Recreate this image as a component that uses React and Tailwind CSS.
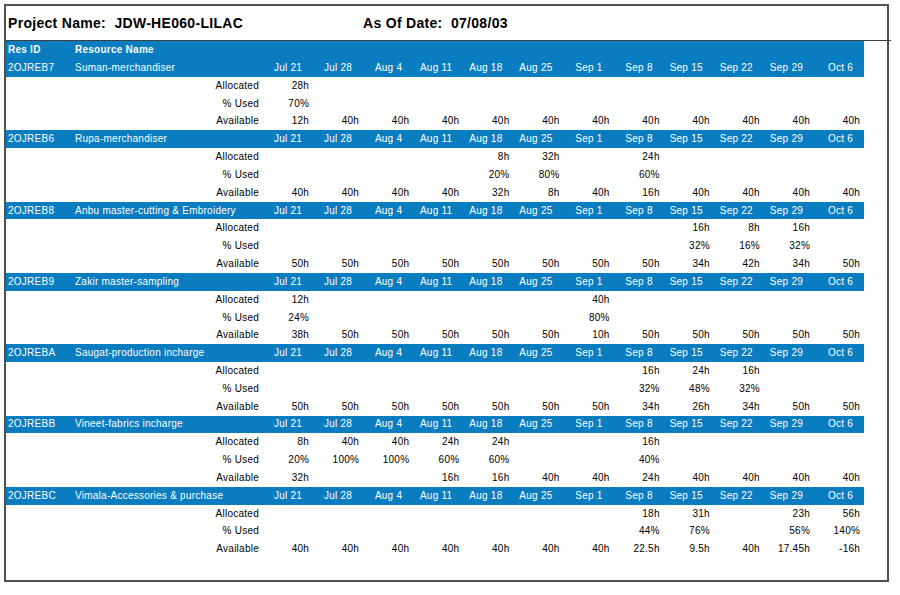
import React from 'react';

const DATES = ['Jul 21', 'Jul 28', 'Aug 4', 'Aug 11', 'Aug 18', 'Aug 25', 'Sep 1', 'Sep 8', 'Sep 15', 'Sep 22', 'Sep 29', 'Oct 6'];

const e = '';

const RESOURCES = [
  {
    id: '2OJREB7',
    name: 'Suman-merchandiser',
    allocated: ['28h', e, e, e, e, e, e, e, e, e, e, e],
    used: ['70%', e, e, e, e, e, e, e, e, e, e, e],
    available: ['12h', '40h', '40h', '40h', '40h', '40h', '40h', '40h', '40h', '40h', '40h', '40h'],
  },
  {
    id: '2OJREB6',
    name: 'Rupa-merchandiser',
    allocated: [e, e, e, e, '8h', '32h', e, '24h', e, e, e, e],
    used: [e, e, e, e, '20%', '80%', e, '60%', e, e, e, e],
    available: ['40h', '40h', '40h', '40h', '32h', '8h', '40h', '16h', '40h', '40h', '40h', '40h'],
  },
  {
    id: '2OJREB8',
    name: 'Anbu master-cutting & Embroidery',
    allocated: [e, e, e, e, e, e, e, e, '16h', '8h', '16h', e],
    used: [e, e, e, e, e, e, e, e, '32%', '16%', '32%', e],
    available: ['50h', '50h', '50h', '50h', '50h', '50h', '50h', '50h', '34h', '42h', '34h', '50h'],
  },
  {
    id: '2OJREB9',
    name: 'Zakir master-sampling',
    allocated: ['12h', e, e, e, e, e, '40h', e, e, e, e, e],
    used: ['24%', e, e, e, e, e, '80%', e, e, e, e, e],
    available: ['38h', '50h', '50h', '50h', '50h', '50h', '10h', '50h', '50h', '50h', '50h', '50h'],
  },
  {
    id: '2OJREBA',
    name: 'Saugat-production incharge',
    allocated: [e, e, e, e, e, e, e, '16h', '24h', '16h', e, e],
    used: [e, e, e, e, e, e, e, '32%', '48%', '32%', e, e],
    available: ['50h', '50h', '50h', '50h', '50h', '50h', '50h', '34h', '26h', '34h', '50h', '50h'],
  },
  {
    id: '2OJREBB',
    name: 'Vineet-fabrics incharge',
    allocated: ['8h', '40h', '40h', '24h', '24h', e, e, '16h', e, e, e, e],
    used: ['20%', '100%', '100%', '60%', '60%', e, e, '40%', e, e, e, e],
    available: ['32h', e, e, '16h', '16h', '40h', '40h', '24h', '40h', '40h', '40h', '40h'],
  },
  {
    id: '2OJREBC',
    name: 'Vimala-Accessories & purchase',
    allocated: [e, e, e, e, e, e, e, '18h', '31h', e, '23h', '56h'],
    used: [e, e, e, e, e, e, e, '44%', '76%', e, '56%', '140%'],
    available: ['40h', '40h', '40h', '40h', '40h', '40h', '40h', '22.5h', '9.5h', '40h', '17.45h', '-16h'],
  },
];

const grid = 'grid grid-cols-[67px_184px_repeat(12,50.1px)] items-center h-[17.83px] pl-[2px] pr-[4px] leading-none';

const ValueRow = ({ label, values }) => (
  <div className={grid}>
    <div />
    <div className="text-right">{label}</div>
    {values.map((v, i) => (
      <div key={i} className="text-right">{v}</div>
    ))}
  </div>
);

const Block = ({ r }) => (
  <div>
    <div className={`${grid} bg-[#0a7cc0] text-white`}>
      <div>{r.id}</div>
      <div className="whitespace-nowrap">{r.name}</div>
      {DATES.map((d) => (
        <div key={d} className="text-right pr-[7px]">{d}</div>
      ))}
    </div>
    <ValueRow label="Allocated" values={r.allocated} />
    <ValueRow label="% Used" values={r.used} />
    <ValueRow label="Available" values={r.available} />
  </div>
);

const App = () => {
  return (
    <div
      className="w-[900px] h-[595px] bg-white text-black pt-[4px] pl-[4px]"
      style={{ fontFamily: '"Liberation Sans", Arial, sans-serif' }}
    >
      <div className="w-[885px] h-[578px] border-2 border-[#505050]">
        <div className="h-[35px] flex items-center pl-[2px] border-b border-[#404040] mr-[-4px] text-[14px] font-bold tracking-[0.3px]">
          <span className="w-[355px]">Project Name:&nbsp; JDW-HE060-LILAC</span>
          <span>As Of Date:&nbsp; 07/08/03</span>
        </div>
        <div className="w-[858px] text-[10px] tracking-[0.25px]">
          <div className="grid grid-cols-[67px_184px] items-center h-[18px] pl-[2px] bg-[#0a7cc0] text-white font-bold leading-none">
            <div>Res ID</div>
            <div>Resource Name</div>
          </div>
          {RESOURCES.map((r) => (
            <Block key={r.id} r={r} />
          ))}
        </div>
      </div>
    </div>
  );
};

export default App;
